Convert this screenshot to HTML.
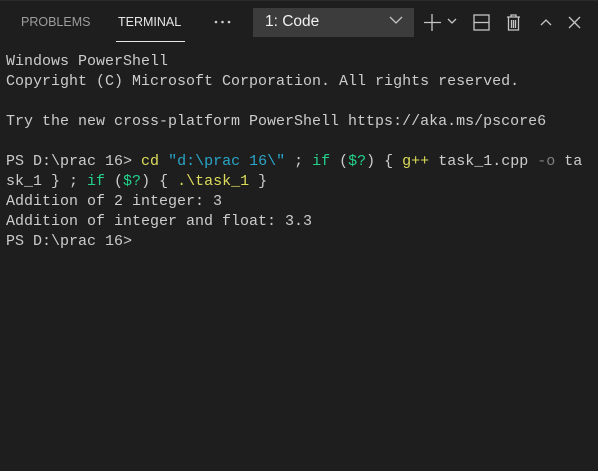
<!DOCTYPE html>
<html><head><style>
body{margin:0;width:598px;height:471px;background:#1e1e1e;overflow:hidden;position:relative;font-family:"Liberation Sans",sans-serif}
.tab{position:absolute;top:15px;font-size:12.5px;letter-spacing:0px}
.term{position:absolute;left:6px;top:52px;font-family:"Liberation Mono",monospace;font-size:15px;line-height:20px;color:#cccccc;white-space:pre}
.y{color:#dcdc5a}.c{color:#2aa6c9}.g{color:#23d18b}.gr{color:#808080}
</style></head><body>
<div style="position:absolute;left:0;top:0;width:598px;height:1px;background:#2b2b2b"></div>
<div class="tab" style="left:21px;color:#9d9d9d">PROBLEMS</div>
<div class="tab" style="left:118px;color:#e7e7e7">TERMINAL</div>
<div style="position:absolute;left:116px;top:41px;width:69px;height:1px;background:#e7e7e7"></div>
<svg style="position:absolute;left:0;top:0" width="598" height="50">
<g fill="#cccccc"><circle cx="216" cy="22" r="1.3"/><circle cx="222.5" cy="22" r="1.3"/><circle cx="229" cy="22" r="1.3"/></g>
</svg>
<div style="position:absolute;left:253px;top:8px;width:161px;height:29px;background:#3c3c3c"></div>
<div style="position:absolute;left:265px;top:13px;color:#f0f0f0;font-size:15.5px">1: Code</div>
<svg style="position:absolute;left:0;top:0" width="598" height="50" fill="none" stroke="#c5c5c5" stroke-width="1.3">
<path d="M390 17l6 6 6-6"/>
<path d="M432 14v17M424 22.5h17"/>
<path d="M448 19l4 4 4-4"/>
<rect x="474" y="15" width="15" height="15"/><path d="M474 22.5h15"/>
<path d="M507 17h13M511 17v-2h5v2M508.5 17v13h10v-13M511.5 20v8M513.5 20v8M515.5 20v8"/>
<path d="M541 25l5-5 5 5"/>
<path d="M569 17l11 11M580 17l-11 11"/>
</svg>
<div class="term">Windows PowerShell
Copyright (C) Microsoft Corporation. All rights reserved.

Try the new cross-platform PowerShell https://aka.ms/pscore6

PS D:\prac 16> <span class="y">cd</span> <span class="c">"d:\prac 16\"</span> ; <span class="g">if</span> (<span class="g">$?</span>) { <span class="y">g++</span> task_1.cpp <span class="gr">-o</span> ta
sk_1 } ; <span class="g">if</span> (<span class="g">$?</span>) { <span class="y">.\task_1</span> }
Addition of 2 integer: 3
Addition of integer and float: 3.3
PS D:\prac 16></div>
</body></html>
